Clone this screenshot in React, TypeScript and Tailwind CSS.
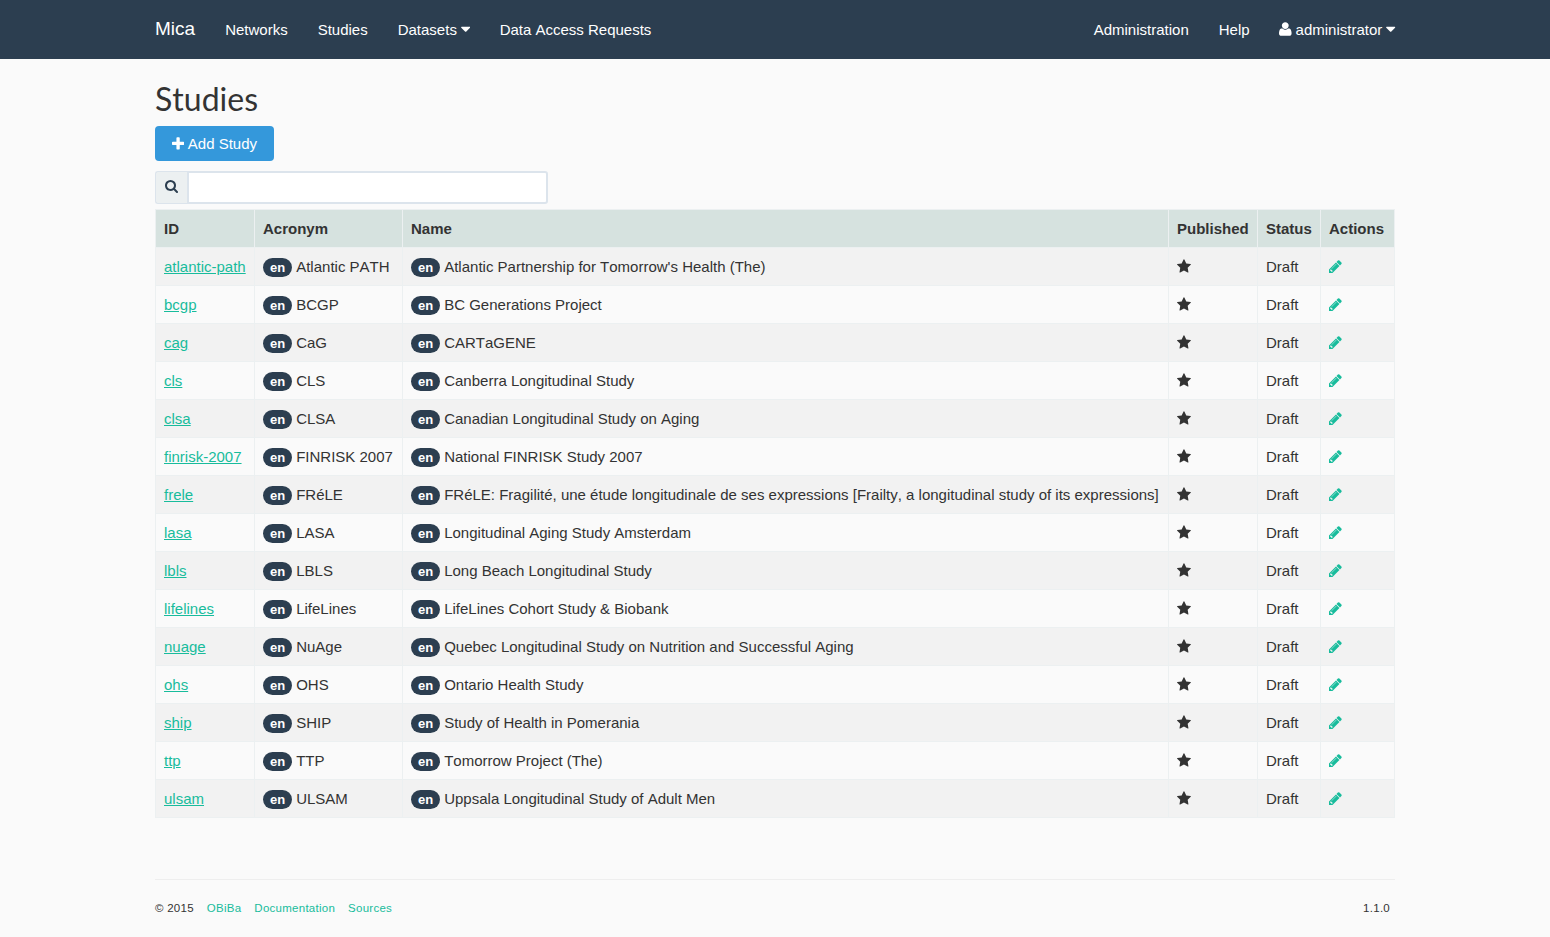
import React from 'react';

const icons = {
  star: {
    box: '64 0 1664 1792',
    d: 'M1728 647q0 22-26 48l-363 354 86 500q1 7 1 20 0 21-10.5 35.5t-30.5 14.5q-19 0-40-12l-449-236-449 236q-22 12-40 12-21 0-31.5-14.5t-10.5-35.5q0-6 2-20l86-500-364-354q-25-27-25-48 0-37 56-46l502-73 225-455q19-41 49-41t49 41l225 455 502 73q56 9 56 46z',
  },
  plus: {
    box: '192 0 1408 1792',
    d: 'M1600 736v192q0 40-28 68t-68 28h-416v416q0 40-28 68t-68 28h-192q-40 0-68-28t-28-68v-416h-416q-40 0-68-28t-28-68v-192q0-40 28-68t68-28h416v-416q0-40 28-68t68-28h192q40 0 68 28t28 68v416h416q40 0 68 28t28 68z',
  },
  search: {
    box: '64 0 1664 1792',
    d: 'M1216 832q0-185-131.5-316.5t-316.5-131.5-316.5 131.5-131.5 316.5 131.5 316.5 316.5 131.5 316.5-131.5 131.5-316.5zm512 832q0 52-38 90t-90 38q-54 0-90-38l-343-342q-179 124-399 124-143 0-273.5-55.5t-225-150-150-225-55.5-273.5 55.5-273.5 150-225 225-150 273.5-55.5 273.5 55.5 225 150 150 225 55.5 273.5q0 220-124 399l343 343q37 37 37 90z',
  },
  pencil: {
    box: '128 0 1536 1792',
    d: 'M491 1536l91-91-235-235-91 91v107h128v128h107zm523-928q0-22-22-22-10 0-17 7l-542 542q-7 7-7 17 0 22 22 22 10 0 17-7l542-542q7-7 7-17zm-54-192l416 416-832 832h-416v-416zm683 96q0 53-37 90l-166 166-416-416 166-165q36-38 90-38 53 0 91 38l235 234q37 39 37 91z',
  },
  user: {
    box: '0 0 1408 1792',
    d: 'M1408 1405q0 120-73 189.5t-194 69.5h-874q-121 0-194-69.5t-73-189.5q0-53 3.5-103.5t14-109t26.5-108.5t43-97.5t62-81t85.5-53.5t111.5-20q9 0 42 21.5t74.5 48t108 48t133.5 21.5t133.5-21.5t108-48t74.5-48t42-21.5q61 0 111.5 20t85.5 53.5t62 81t43 97.5t26.5 108.5t14 109t3.5 103.5zM1088 512q0 159-112.5 271.5t-271.5 112.5t-271.5-112.5t-112.5-271.5t112.5-271.5t271.5-112.5t271.5 112.5t112.5 271.5z',
  },
  caret: {
    box: '384 0 1024 1792',
    d: 'M1408 704q0 26-19 45l-448 448q-19 19-45 19t-45-19l-448-448q-19-19-19-45t19-45 45-19h896q26 0 45 19t19 45z',
  },
};

function Icon({ name, className = '' }: { name: keyof typeof icons; className?: string }) {
  return (
    <svg viewBox={icons[name].box} fill="currentColor" aria-hidden="true" className={`shrink-0 ${className}`}>
      <path d={icons[name].d} />
    </svg>
  );
}

const Caret = () => <Icon name="caret" className="-mt-px -mr-[0.6px] ml-[4px] h-[16px] w-[9.34px]" />;

const studies = [
  ['atlantic-path', 'Atlantic PATH', "Atlantic Partnership for Tomorrow's Health (The)"],
  ['bcgp', 'BCGP', 'BC Generations Project'],
  ['cag', 'CaG', 'CARTaGENE'],
  ['cls', 'CLS', 'Canberra Longitudinal Study'],
  ['clsa', 'CLSA', 'Canadian Longitudinal Study on Aging'],
  ['finrisk-2007', 'FINRISK 2007', 'National FINRISK Study 2007'],
  ['frele', 'FRéLE', 'FRéLE: Fragilité, une étude longitudinale de ses expressions [Frailty, a longitudinal study of its expressions]'],
  ['lasa', 'LASA', 'Longitudinal Aging Study Amsterdam'],
  ['lbls', 'LBLS', 'Long Beach Longitudinal Study'],
  ['lifelines', 'LifeLines', 'LifeLines Cohort Study & Biobank'],
  ['nuage', 'NuAge', 'Quebec Longitudinal Study on Nutrition and Successful Aging'],
  ['ohs', 'OHS', 'Ontario Health Study'],
  ['ship', 'SHIP', 'Study of Health in Pomerania'],
  ['ttp', 'TTP', 'Tomorrow Project (The)'],
  ['ulsam', 'ULSAM', 'Uppsala Longitudinal Study of Adult Men'],
];

const columns = [
  ['ID', 'w-[99px]'],
  ['Acronym', 'w-[148px]'],
  ['Name', 'w-[766px]'],
  ['Published', 'w-[89px]'],
  ['Status', 'w-[63px]'],
  ['Actions', 'w-[74px]'],
];

function Localized({ text }: { text: string }) {
  return (
    <div className="flex h-[21px] items-center">
      <span className="mt-px mr-[4.2px] flex h-[19px] w-[29px] shrink-0 items-center justify-center rounded-[10px] bg-[#2c3e50] text-[13px] leading-[13px] font-bold text-white">
        en
      </span>
      <span>{text}</span>
    </div>
  );
}

const cell = 'border border-[#ecf0f1] px-2 py-2 align-top';

export default function App() {
  return (
    <div className="flex min-h-screen flex-col bg-[#fafafa] font-['Liberation_Sans',Arial,sans-serif] text-[15px] leading-[21px] text-[#333] [font-kerning:none]">
      <header className="h-[59px] bg-[#2c3e50] text-white">
        <div className="mx-auto flex h-full w-[1240px] justify-between">
          <nav className="flex gap-[30px] pt-[19px]">
            <a className="-mt-[1px] text-[19px]">Mica</a>
            <a>Networks</a>
            <a>Studies</a>
            <a className="flex h-[21px] items-center">Datasets<Caret /></a>
            <a>Data Access Requests</a>
          </nav>
          <nav className="flex gap-[30px] pt-[19px]">
            <a>Administration</a>
            <a>Help</a>
            <a className="flex h-[21px] items-center">
              <Icon name="user" className="-mt-px mr-[4px] -ml-[0.6px] h-[16px] w-[12.57px]" />
              administrator
              <Caret />
            </a>
          </nav>
        </div>
      </header>

      <main className="mx-auto w-[1240px]">
        <h1 className="mt-[21px] h-[46px] font-[Lato,sans-serif] text-[32px] leading-[38px]">Studies</h1>
        <button className="flex h-[35px] w-[119px] items-center justify-center rounded-[4px] bg-[#3498db] text-white">
          <Icon name="plus" className="mr-[4px] -ml-[0.3px] h-[16px] w-[12.2px]" />
          Add Study
        </button>
        <div className="mt-[10px] flex h-[33px] w-[393px]">
          <span className="flex w-8 items-center justify-center rounded-l-[3px] border border-r-0 border-[#dce4ec] bg-[#ecf0f1] text-[#2c3e50]">
            <Icon name="search" className="mb-[3px] h-[14px] w-[13px]" />
          </span>
          <input className="min-w-0 flex-1 rounded-r-[3px] border-2 border-[#dce4ec] bg-white px-3 outline-none" />
        </div>

        <table className="mt-[5px] w-[1240px] table-fixed border-collapse">
          <thead>
            <tr className="h-[38px] bg-[#d6e2df] text-left">
              {columns.map(([label, width]) => (
                <th key={label} className={`${cell} ${width} font-bold`}>{label}</th>
              ))}
            </tr>
          </thead>
          <tbody>
            {studies.map(([id, acronym, name]) => (
              <tr key={id} className="h-[38px] odd:bg-[#f2f2f2]">
                <td className={cell}><a className="text-[#18bc9c] underline">{id}</a></td>
                <td className={`${cell} whitespace-nowrap`}><Localized text={acronym} /></td>
                <td className={`${cell} whitespace-nowrap`}><Localized text={name} /></td>
                <td className={cell}><Icon name="star" className="mt-[3px] h-[15px] w-[13.93px]" /></td>
                <td className={cell}>Draft</td>
                <td className={cell}><Icon name="pencil" className="mt-[3px] h-[15px] w-[12.86px] text-[#18bc9c]" /></td>
              </tr>
            ))}
          </tbody>
        </table>
      </main>

      <footer className="mx-auto mt-[61px] flex w-[1240px] justify-between border-t border-[#eee] pt-[18px] pr-[5px] text-[11.5px] tracking-[0.26px]">
        <div className="flex gap-[13px]">
          <span>© 2015</span>
          <a className="text-[#18bc9c]">OBiBa</a>
          <a className="text-[#18bc9c]">Documentation</a>
          <a className="text-[#18bc9c]">Sources</a>
        </div>
        <span>1.1.0</span>
      </footer>
    </div>
  );
}
